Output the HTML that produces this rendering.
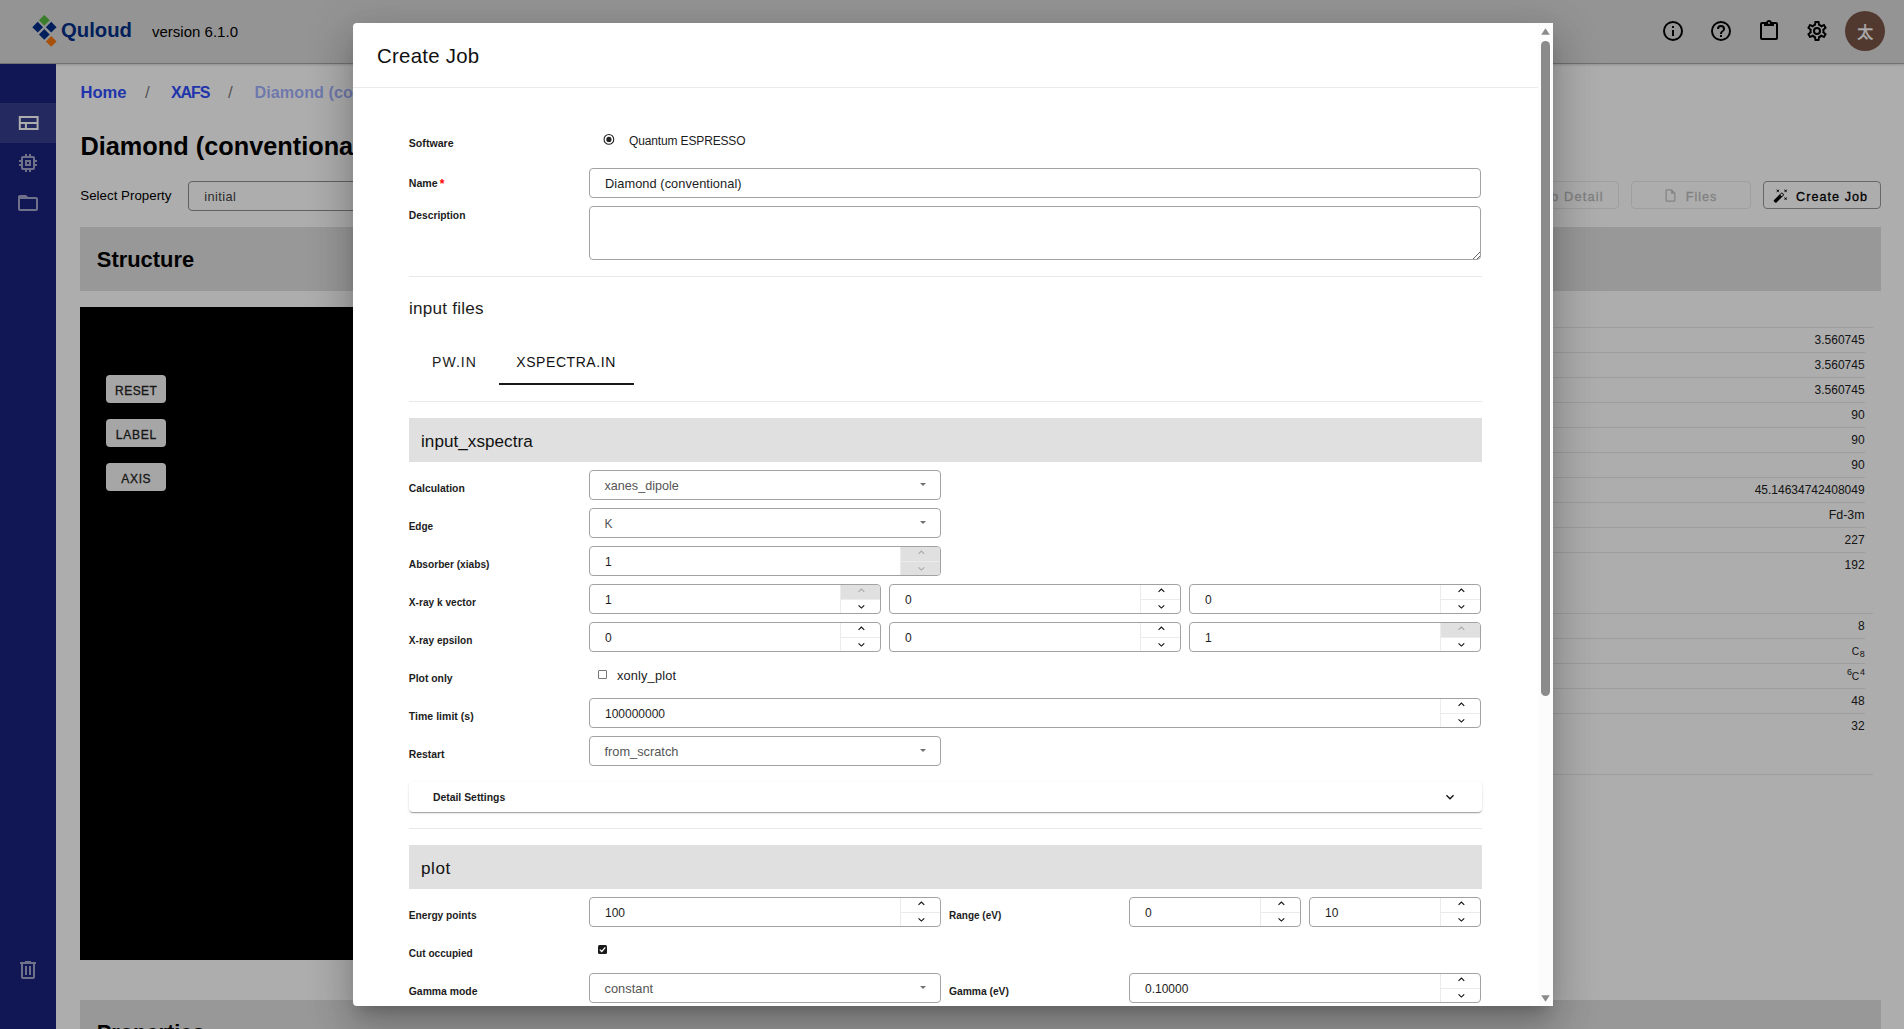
<!DOCTYPE html><html lang="en"><head><meta charset="utf-8"><title>Create Job</title><style>
html,body{margin:0;padding:0;background:#fff}
body{width:1904px;height:1029px;overflow:hidden;position:relative;font-family:"Liberation Sans","Noto Sans CJK JP",sans-serif;}
.t{position:absolute;white-space:nowrap;line-height:1;}
#page{position:absolute;left:0;top:0;width:1904px;height:1029px;overflow:hidden}
#modal{position:absolute;left:353px;top:23px;width:1200px;height:983px;background:#fff;border-radius:4px 0 0 4px;overflow:hidden;
 box-shadow:0 11px 15px -7px rgba(0,0,0,.2),0 24px 38px 3px rgba(0,0,0,.14),0 9px 46px 8px rgba(0,0,0,.12)}
</style></head><body><div id="page"><div style="position:absolute;left:0px;top:0px;width:1904px;height:1029px;background:#fff"></div><div style="position:absolute;left:0px;top:0px;width:1904px;height:63px;background:#dadada;border-bottom:1px solid #a6a6a6;box-shadow:0 1px 2px rgba(0,0,0,.16)"></div><svg style="position:absolute;left:28px;top:10px" width="36" height="44" viewBox="28 10 36 44"><rect x="40.5" y="16.5" width="7.6" height="7.6" fill="#55b83e" transform="rotate(45 44.3 20.3)"/><rect x="33.900000000000006" y="23.4" width="7.6" height="7.6" fill="#002f87" transform="rotate(45 37.7 27.2)"/><rect x="47.400000000000006" y="23.4" width="7.6" height="7.6" fill="#002f87" transform="rotate(45 51.2 27.2)"/><rect x="40.5" y="30.599999999999998" width="7.6" height="7.6" fill="#002f87" transform="rotate(45 44.3 34.4)"/><rect x="47.400000000000006" y="37.6" width="7.6" height="7.6" fill="#f7760f" transform="rotate(45 51.2 41.4)"/></svg><span class="t" style="left:61.00px;top:20.00px;font-size:20.3px;color:#002f87;font-weight:700;letter-spacing:-0.005px;">Quloud</span><span class="t" style="left:152.00px;top:24.00px;font-size:15.0px;color:#000;letter-spacing:0.009px;">version 6.1.0</span><svg style="position:absolute;left:1661px;top:19px" width="24" height="24" viewBox="0 0 24 24"><path fill="#000" d="M11,9H13V7H11M12,20C7.59,20 4,16.41 4,12C4,7.59 7.59,4 12,4C16.41,4 20,7.59 20,12C20,16.41 16.41,20 12,20M12,2A10,10 0 0,0 2,12A10,10 0 0,0 12,22A10,10 0 0,0 22,12A10,10 0 0,0 12,2M11,17H13V11H11V17Z"/></svg><svg style="position:absolute;left:1709px;top:19px" width="24" height="24" viewBox="0 0 24 24"><path fill="#000" d="M11,18H13V16H11V18M12,2A10,10 0 0,0 2,12A10,10 0 0,0 12,22A10,10 0 0,0 22,12A10,10 0 0,0 12,2M12,20C7.59,20 4,16.41 4,12C4,7.59 7.59,4 12,4C16.41,4 20,7.59 20,12C20,16.41 16.41,20 12,20M12,6A4,4 0 0,0 8,10H10A2,2 0 0,1 12,8A2,2 0 0,1 14,10C14,12 11,11.75 11,15H13C13,12.75 16,12.5 16,10A4,4 0 0,0 12,6Z"/></svg><svg style="position:absolute;left:1757px;top:19px" width="24" height="24" viewBox="0 0 24 24"><path fill="#000" d="M19,3H14.82C14.4,1.84 13.3,1 12,1C10.7,1 9.6,1.84 9.18,3H5A2,2 0 0,0 3,5V19A2,2 0 0,0 5,21H19A2,2 0 0,0 21,19V5A2,2 0 0,0 19,3M12,3A1,1 0 0,1 13,4A1,1 0 0,1 12,5A1,1 0 0,1 11,4A1,1 0 0,1 12,3M7,7H17V5H19V19H5V5H7V7Z"/></svg><svg style="position:absolute;left:1805px;top:19px" width="24" height="24" viewBox="0 0 24 24"><path fill="#000" d="M12,8A4,4 0 0,1 16,12A4,4 0 0,1 12,16A4,4 0 0,1 8,12A4,4 0 0,1 12,8M12,10A2,2 0 0,0 10,12A2,2 0 0,0 12,14A2,2 0 0,0 14,12A2,2 0 0,0 12,10M10,22C9.75,22 9.54,21.82 9.5,21.58L9.13,18.93C8.5,18.68 7.96,18.34 7.44,17.94L4.95,18.95C4.73,19.03 4.46,18.95 4.34,18.73L2.34,15.27C2.21,15.05 2.27,14.78 2.46,14.63L4.57,12.97L4.5,12L4.57,11L2.46,9.37C2.27,9.22 2.21,8.95 2.34,8.73L4.34,5.27C4.46,5.05 4.73,4.96 4.95,5.05L7.44,6.05C7.96,5.66 8.5,5.32 9.13,5.07L9.5,2.42C9.54,2.18 9.75,2 10,2H14C14.25,2 14.46,2.18 14.5,2.42L14.87,5.07C15.5,5.32 16.04,5.66 16.56,6.05L19.05,5.05C19.27,4.96 19.54,5.05 19.66,5.27L21.66,8.73C21.79,8.95 21.73,9.22 21.54,9.37L19.43,11L19.5,12L19.43,13L21.54,14.63C21.73,14.78 21.79,15.05 21.66,15.27L19.66,18.73C19.54,18.95 19.27,19.04 19.05,18.95L16.56,17.95C16.04,18.34 15.5,18.68 14.87,18.93L14.5,21.58C14.46,21.82 14.25,22 14,22H10M11.25,4L10.88,6.61C9.68,6.86 8.62,7.5 7.85,8.39L5.44,7.35L4.69,8.65L6.8,10.2C6.4,11.37 6.4,12.64 6.8,13.8L4.68,15.36L5.43,16.66L7.86,15.62C8.63,16.5 9.68,17.14 10.87,17.38L11.24,20H12.76L13.13,17.39C14.32,17.14 15.37,16.5 16.14,15.62L18.57,16.66L19.32,15.36L17.2,13.81C17.6,12.64 17.6,11.37 17.2,10.2L19.31,8.65L18.56,7.35L16.15,8.39C15.38,7.5 14.32,6.86 13.12,6.62L12.75,4H11.25Z"/></svg><div style="position:absolute;left:1845px;top:11px;width:40px;height:40px;border-radius:50%;background:#795548"></div><span class="t" style="left:1857.30px;top:25.00px;font-size:16.0px;color:#fff;letter-spacing:0.016px;-webkit-text-stroke:0.35px #fff;">太</span><div style="position:absolute;left:0px;top:64px;width:56px;height:965px;background:#1a237e"></div><div style="position:absolute;left:0px;top:103px;width:56px;height:40px;background:rgba(255,255,255,.12)"></div><svg style="position:absolute;left:16px;top:111px" width="24" height="24" viewBox="0 0 24 24"><path fill="#fff" d="M2.8,5H22.6V19H2.8V5M4.8,7V11H20.6V7H4.8M4.8,13V17H8.9V13H4.8M10.9,13V17H20.6V13H10.9Z"/></svg><svg style="position:absolute;left:16px;top:151px" width="24" height="24" viewBox="0 0 24 24"><path fill="rgba(255,255,255,.6)" d="M17,17H7V7H17M21,11V9H19V7C19,5.89 18.1,5 17,5H15V3H13V5H11V3H9V5H7C5.89,5 5,5.89 5,7V9H3V11H5V13H3V15H5V17A2,2 0 0,0 7,19H9V21H11V19H13V21H15V19H17A2,2 0 0,0 19,17V15H21V13H19V11M13,13H11V11H13M15,9H9V15H15V9Z"/></svg><svg style="position:absolute;left:16px;top:191px" width="24" height="24" viewBox="0 0 24 24"><path fill="rgba(255,255,255,.6)" d="M20,18H4V8H20M20,6H12L10,4H4C2.89,4 2,4.89 2,6V18A2,2 0 0,0 4,20H20A2,2 0 0,0 22,18V8C22,6.89 21.1,6 20,6Z"/></svg><svg style="position:absolute;left:16px;top:958px" width="24" height="24" viewBox="0 0 24 24"><path fill="rgba(255,255,255,.6)" d="M9,3V4H4V6H5V19A2,2 0 0,0 7,21H17A2,2 0 0,0 19,19V6H20V4H15V3H9M7,6H17V19H7V6M9,8V17H11V8H9M13,8V17H15V8H13Z"/></svg><span class="t" style="left:80.50px;top:85.00px;font-size:16.6px;color:#304ffe;font-weight:700;letter-spacing:-0.031px;">Home</span><span class="t" style="left:145.00px;top:84.00px;font-size:17.1px;color:rgba(0,0,0,.55);letter-spacing:1.528px;">/</span><span class="t" style="left:171.00px;top:85.00px;font-size:16.0px;color:#304ffe;font-weight:700;letter-spacing:-1.068px;">XAFS</span><span class="t" style="left:228.00px;top:84.00px;font-size:17.1px;color:rgba(0,0,0,.55);letter-spacing:1.528px;">/</span><span class="t" style="left:254.60px;top:84.00px;font-size:16.2px;color:rgba(48,79,254,.45);font-weight:700;letter-spacing:0.025px;">Diamond (conventional)</span><span class="t" style="left:80.50px;top:134.00px;font-size:25.3px;color:#000;font-weight:700;">Diamond (conventional)</span><span class="t" style="left:80.30px;top:189.00px;font-size:13.3px;color:#000;letter-spacing:0.018px;">Select Property</span><div style="position:absolute;left:188px;top:181px;width:500px;height:28px;border:1px solid #8e8e8e;border-radius:4px"></div><span class="t" style="left:204.20px;top:191.00px;font-size:12.8px;color:#424242;letter-spacing:0.404px;">initial</span><div style="position:absolute;left:1499px;top:181px;width:118px;height:26px;border:1px solid #eaeaea;border-radius:4px"></div><span class="t" style="left:1535.27px;top:191.00px;font-size:12.8px;color:#bdbdbd;letter-spacing:1.145px;-webkit-text-stroke:0.3px;">Job Detail</span><div style="position:absolute;left:1631px;top:181px;width:118px;height:26px;border:1px solid #eaeaea;border-radius:4px"></div><svg style="position:absolute;left:1662.6px;top:188px" width="15" height="15" viewBox="0 0 24 24"><path fill="#c4c4c4" d="M14,2H6A2,2 0 0,0 4,4V20A2,2 0 0,0 6,22H18A2,2 0 0,0 20,20V8L14,2M18,20H6V4H13V9H18V20Z"/></svg><span class="t" style="left:1685.70px;top:191.00px;font-size:12.5px;color:#bdbdbd;letter-spacing:1.068px;-webkit-text-stroke:0.3px;">Files</span><div style="position:absolute;left:1763px;top:181px;width:116px;height:26px;border:1px solid #9a9a9a;border-radius:4px"></div><svg style="position:absolute;left:1773.2px;top:187.5px" width="15.5" height="15.5" viewBox="0 0 24 24"><path fill="#000" d="M7.5,5.6L5,7L6.4,4.5L5,2L7.5,3.4L10,2L8.6,4.5L10,7L7.5,5.6M19.5,15.4L22,14L20.6,16.5L22,19L19.5,17.6L17,19L18.4,16.5L17,14L19.5,15.4M22,2L20.6,4.5L22,7L19.5,5.6L17,7L18.4,4.5L17,2L19.5,3.4L22,2M13.34,12.78L15.78,10.34L13.66,8.22L11.22,10.66L13.34,12.78M14.37,7.29L16.71,9.63C17.1,10 17.1,10.65 16.71,11.04L5.04,22.71C4.65,23.1 4,23.1 3.63,22.71L1.29,20.37C0.9,20 0.9,19.35 1.29,18.96L12.96,7.29C13.35,6.9 14,6.9 14.37,7.29Z"/></svg><span class="t" style="left:1796.10px;top:191.00px;font-size:12.6px;color:#000;letter-spacing:1.046px;-webkit-text-stroke:0.3px;">Create Job</span><div style="position:absolute;left:80px;top:227px;width:1801px;height:64px;background:#e0e0e0"></div><span class="t" style="left:96.80px;top:249.00px;font-size:21.9px;color:#000;font-weight:700;letter-spacing:0.005px;">Structure</span><div style="position:absolute;left:80px;top:307px;width:600px;height:653px;background:#000"></div><div style="position:absolute;left:106px;top:375px;width:60px;height:28px;background:#f5f5f5;border-radius:4px"></div><span class="t" style="left:115.09px;top:385.00px;font-size:12.0px;color:#222;letter-spacing:0.451px;-webkit-text-stroke:0.3px;">RESET</span><div style="position:absolute;left:106px;top:419px;width:60px;height:28px;background:#f5f5f5;border-radius:4px"></div><span class="t" style="left:115.70px;top:429.00px;font-size:12.0px;color:#222;letter-spacing:0.812px;-webkit-text-stroke:0.3px;">LABEL</span><div style="position:absolute;left:106px;top:463px;width:60px;height:28px;background:#f5f5f5;border-radius:4px"></div><span class="t" style="left:121.37px;top:473.00px;font-size:12.0px;color:#222;letter-spacing:0.64px;-webkit-text-stroke:0.3px;">AXIS</span><div style="position:absolute;left:900px;top:327px;width:973px;height:1px;background:#e8e8e8"></div><div style="position:absolute;left:900px;top:352px;width:965px;height:1px;background:#e8e8e8"></div><div style="position:absolute;left:900px;top:377px;width:965px;height:1px;background:#e8e8e8"></div><div style="position:absolute;left:900px;top:402px;width:965px;height:1px;background:#e8e8e8"></div><div style="position:absolute;left:900px;top:427px;width:965px;height:1px;background:#e8e8e8"></div><div style="position:absolute;left:900px;top:452px;width:965px;height:1px;background:#e8e8e8"></div><div style="position:absolute;left:900px;top:477px;width:965px;height:1px;background:#e8e8e8"></div><div style="position:absolute;left:900px;top:502px;width:965px;height:1px;background:#e8e8e8"></div><div style="position:absolute;left:900px;top:527px;width:965px;height:1px;background:#e8e8e8"></div><div style="position:absolute;left:900px;top:552px;width:965px;height:1px;background:#e8e8e8"></div><div style="position:absolute;left:900px;top:613px;width:973px;height:1px;background:#e8e8e8"></div><div style="position:absolute;left:900px;top:638px;width:965px;height:1px;background:#e8e8e8"></div><div style="position:absolute;left:900px;top:663px;width:965px;height:1px;background:#e8e8e8"></div><div style="position:absolute;left:900px;top:688px;width:965px;height:1px;background:#e8e8e8"></div><div style="position:absolute;left:900px;top:713px;width:965px;height:1px;background:#e8e8e8"></div><div style="position:absolute;left:900px;top:774px;width:973px;height:1px;background:#e8e8e8"></div><span class="t" style="left:1814.62px;top:334.00px;font-size:12.0px;color:#212121;letter-spacing:-0.01px;">3.560745</span><span class="t" style="left:1814.62px;top:359.00px;font-size:12.0px;color:#212121;letter-spacing:-0.01px;">3.560745</span><span class="t" style="left:1814.62px;top:384.00px;font-size:12.0px;color:#212121;letter-spacing:-0.01px;">3.560745</span><span class="t" style="left:1851.26px;top:409.00px;font-size:12.0px;color:#212121;letter-spacing:-0.01px;">90</span><span class="t" style="left:1851.26px;top:434.00px;font-size:12.0px;color:#212121;letter-spacing:-0.01px;">90</span><span class="t" style="left:1851.26px;top:459.00px;font-size:12.0px;color:#212121;letter-spacing:-0.01px;">90</span><span class="t" style="left:1754.68px;top:484.00px;font-size:12.0px;color:#212121;letter-spacing:-0.012px;">45.14634742408049</span><span class="t" style="left:1828.77px;top:509.00px;font-size:12.4px;color:#212121;">Fd-3m</span><span class="t" style="left:1844.60px;top:534.00px;font-size:12.0px;color:#212121;letter-spacing:-0.013px;">227</span><span class="t" style="left:1844.60px;top:559.00px;font-size:12.0px;color:#212121;letter-spacing:-0.013px;">192</span><span class="t" style="left:1857.92px;top:620.00px;font-size:12.0px;color:#212121;">8</span><span class="t" style="left:1851.26px;top:695.00px;font-size:12.0px;color:#212121;letter-spacing:-0.01px;">48</span><span class="t" style="left:1851.26px;top:720.00px;font-size:12.0px;color:#212121;letter-spacing:-0.01px;">32</span><span class="t" style="left:1851.80px;top:647.00px;font-size:10.2px;color:#212121;letter-spacing:0.034px;">C</span><span class="t" style="left:1859.70px;top:650.00px;font-size:9.0px;color:#212121;letter-spacing:-0.006px;">8</span><span class="t" style="left:1847.00px;top:668.00px;font-size:9.0px;color:#212121;letter-spacing:-0.806px;">6</span><span class="t" style="left:1851.80px;top:672.00px;font-size:10.2px;color:#212121;letter-spacing:0.034px;">C</span><span class="t" style="left:1860.00px;top:668.00px;font-size:9.0px;color:#212121;letter-spacing:-0.306px;">4</span><div style="position:absolute;left:80px;top:1000px;width:1801px;height:64px;background:#e0e0e0"></div><span class="t" style="left:96.80px;top:1022.00px;font-size:21.8px;color:#000;font-weight:700;letter-spacing:-0.011px;">Properties</span><div style="position:absolute;left:0px;top:0px;width:1904px;height:1029px;background:rgba(0,0,0,.32)"></div></div><div id="modal"><span class="t" style="left:24.00px;top:23.00px;font-size:20.4px;color:#111;letter-spacing:0.271px;">Create Job</span><div style="position:absolute;left:0px;top:64px;width:1185px;height:1px;background:#ebebeb"></div><span class="t" style="left:55.80px;top:115.00px;font-size:10.6px;color:#1c1c1c;font-weight:700;letter-spacing:0.012px;">Software</span><svg style="position:absolute;left:250px;top:111px" width="12" height="12" viewBox="0 0 12 12"><circle cx="5.9" cy="5.4" r="4.85" fill="#fff" stroke="#222" stroke-width="1.1"/><circle cx="5.9" cy="5.4" r="2.6" fill="#222"/></svg><span class="t" style="left:276.10px;top:112.00px;font-size:12.0px;color:#1c1c1c;letter-spacing:-0.151px;">Quantum ESPRESSO</span><span class="t" style="left:55.80px;top:155.00px;font-size:10.6px;color:#1c1c1c;font-weight:700;">Name</span><span class="t" style="left:86.80px;top:155.00px;font-size:12.1px;color:#f00;font-weight:700;letter-spacing:-0.01px;">*</span><div style="position:absolute;left:236px;top:145px;width:890px;height:28px;border:1px solid #a2a2a2;border-radius:4px;background:#fff;"></div><span class="t" style="left:252.00px;top:155.00px;font-size:12.8px;color:#1c1c1c;letter-spacing:0.069px;">Diamond (conventional)</span><span class="t" style="left:55.80px;top:188.00px;font-size:10.3px;color:#1c1c1c;font-weight:700;">Description</span><div style="position:absolute;left:236px;top:183px;width:890px;height:52px;border:1px solid #a2a2a2;border-radius:4px;background:#fff;"></div><svg style="position:absolute;left:1119px;top:228px" width="8" height="8" viewBox="0 0 8 8"><path d="M1,8L8,1M5,8L8,5" stroke="#666" stroke-width="1"/></svg><div style="position:absolute;left:56px;top:253px;width:1073px;height:1px;background:#e9e9e9"></div><span class="t" style="left:56.10px;top:277.00px;font-size:17.1px;color:#1c1c1c;letter-spacing:0.223px;">input files</span><span class="t" style="left:79.00px;top:332.00px;font-size:14.0px;color:#222;letter-spacing:1.066px;">PW.IN</span><span class="t" style="left:163.30px;top:332.00px;font-size:14.0px;color:#111;letter-spacing:0.56px;">XSPECTRA.IN</span><div style="position:absolute;left:146px;top:360px;width:135px;height:2px;background:#1a1a1a"></div><div style="position:absolute;left:56px;top:378px;width:1073px;height:1px;background:#e9e9e9"></div><div style="position:absolute;left:56px;top:395px;width:1073px;height:44px;background:#e0e0e0"></div><span class="t" style="left:68.00px;top:410.00px;font-size:17.1px;color:#111;letter-spacing:0.043px;">input_xspectra</span><span class="t" style="left:55.80px;top:461.00px;font-size:10.4px;color:#1c1c1c;font-weight:700;">Calculation</span><div style="position:absolute;left:236px;top:447px;width:350px;height:28px;border:1px solid #a2a2a2;border-radius:4px;background:#fff;"></div><svg style="position:absolute;left:566.8px;top:459.8px" width="6" height="3" viewBox="0 0 6 3"><path d="M0,0H6L3,3Z" fill="#707070"/></svg><span class="t" style="left:251.50px;top:457.00px;font-size:12.6px;color:#555;letter-spacing:0.012px;">xanes_dipole</span><span class="t" style="left:55.80px;top:499.00px;font-size:10.0px;color:#1c1c1c;font-weight:700;letter-spacing:-0.096px;">Edge</span><div style="position:absolute;left:236px;top:485px;width:350px;height:28px;border:1px solid #a2a2a2;border-radius:4px;background:#fff;"></div><svg style="position:absolute;left:566.8px;top:497.79999999999995px" width="6" height="3" viewBox="0 0 6 3"><path d="M0,0H6L3,3Z" fill="#707070"/></svg><span class="t" style="left:251.50px;top:495.00px;font-size:12.0px;color:#555;letter-spacing:-0.239px;">K</span><span class="t" style="left:55.80px;top:537.00px;font-size:10.2px;color:#1c1c1c;font-weight:700;letter-spacing:-0.02px;">Absorber (xiabs)</span><div style="position:absolute;left:236px;top:523px;width:350px;height:28px;border:1px solid #a2a2a2;border-radius:4px;background:#fff;"></div><div style="position:absolute;left:547px;top:524px;width:1px;height:28px;background:#ebebeb"></div><div style="position:absolute;left:548px;top:524px;width:39px;height:14px;background:#e0e0e0;border-top-right-radius:3px"></div><div style="position:absolute;left:548px;top:538px;width:39px;height:14px;background:#e0e0e0;border-bottom-right-radius:3px"></div><div style="position:absolute;left:548px;top:538px;width:39px;height:1px;background:#ebebeb"></div><svg style="position:absolute;left:0;top:0;overflow:visible" width="1" height="1"><path d="M565.55,530.85L568.40,528.15L571.25,530.85" fill="none" stroke="#aaa" stroke-width="1.15"/><path d="M565.55,544.35L568.40,547.05L571.25,544.35" fill="none" stroke="#aaa" stroke-width="1.15"/></svg><span class="t" style="left:252.00px;top:533.00px;font-size:12.0px;color:#1c1c1c;">1</span><span class="t" style="left:55.80px;top:575.00px;font-size:10.1px;color:#1c1c1c;font-weight:700;letter-spacing:0.024px;">X-ray k vector</span><div style="position:absolute;left:236px;top:561px;width:290px;height:28px;border:1px solid #a2a2a2;border-radius:4px;background:#fff;"></div><div style="position:absolute;left:487px;top:562px;width:1px;height:28px;background:#ebebeb"></div><div style="position:absolute;left:488px;top:562px;width:39px;height:14px;background:#e0e0e0;border-top-right-radius:3px"></div><div style="position:absolute;left:488px;top:576px;width:39px;height:1px;background:#ebebeb"></div><svg style="position:absolute;left:0;top:0;overflow:visible" width="1" height="1"><path d="M505.55,568.85L508.40,566.15L511.25,568.85" fill="none" stroke="#aaa" stroke-width="1.15"/><path d="M505.55,582.35L508.40,585.05L511.25,582.35" fill="none" stroke="#111" stroke-width="1.15"/></svg><span class="t" style="left:252.00px;top:571.00px;font-size:12.0px;color:#1c1c1c;">1</span><div style="position:absolute;left:536px;top:561px;width:290px;height:28px;border:1px solid #a2a2a2;border-radius:4px;background:#fff;"></div><div style="position:absolute;left:787px;top:562px;width:1px;height:28px;background:#ebebeb"></div><div style="position:absolute;left:788px;top:576px;width:39px;height:1px;background:#ebebeb"></div><svg style="position:absolute;left:0;top:0;overflow:visible" width="1" height="1"><path d="M805.55,568.85L808.40,566.15L811.25,568.85" fill="none" stroke="#111" stroke-width="1.15"/><path d="M805.55,582.35L808.40,585.05L811.25,582.35" fill="none" stroke="#111" stroke-width="1.15"/></svg><span class="t" style="left:552.00px;top:571.00px;font-size:12.0px;color:#1c1c1c;">0</span><div style="position:absolute;left:836px;top:561px;width:290px;height:28px;border:1px solid #a2a2a2;border-radius:4px;background:#fff;"></div><div style="position:absolute;left:1087px;top:562px;width:1px;height:28px;background:#ebebeb"></div><div style="position:absolute;left:1088px;top:576px;width:39px;height:1px;background:#ebebeb"></div><svg style="position:absolute;left:0;top:0;overflow:visible" width="1" height="1"><path d="M1105.55,568.85L1108.40,566.15L1111.25,568.85" fill="none" stroke="#111" stroke-width="1.15"/><path d="M1105.55,582.35L1108.40,585.05L1111.25,582.35" fill="none" stroke="#111" stroke-width="1.15"/></svg><span class="t" style="left:852.00px;top:571.00px;font-size:12.0px;color:#1c1c1c;">0</span><span class="t" style="left:55.80px;top:613.00px;font-size:10.1px;color:#1c1c1c;font-weight:700;letter-spacing:0.01px;">X-ray epsilon</span><div style="position:absolute;left:236px;top:599px;width:290px;height:28px;border:1px solid #a2a2a2;border-radius:4px;background:#fff;"></div><div style="position:absolute;left:487px;top:600px;width:1px;height:28px;background:#ebebeb"></div><div style="position:absolute;left:488px;top:614px;width:39px;height:1px;background:#ebebeb"></div><svg style="position:absolute;left:0;top:0;overflow:visible" width="1" height="1"><path d="M505.55,606.85L508.40,604.15L511.25,606.85" fill="none" stroke="#111" stroke-width="1.15"/><path d="M505.55,620.35L508.40,623.05L511.25,620.35" fill="none" stroke="#111" stroke-width="1.15"/></svg><span class="t" style="left:252.00px;top:609.00px;font-size:12.0px;color:#1c1c1c;">0</span><div style="position:absolute;left:536px;top:599px;width:290px;height:28px;border:1px solid #a2a2a2;border-radius:4px;background:#fff;"></div><div style="position:absolute;left:787px;top:600px;width:1px;height:28px;background:#ebebeb"></div><div style="position:absolute;left:788px;top:614px;width:39px;height:1px;background:#ebebeb"></div><svg style="position:absolute;left:0;top:0;overflow:visible" width="1" height="1"><path d="M805.55,606.85L808.40,604.15L811.25,606.85" fill="none" stroke="#111" stroke-width="1.15"/><path d="M805.55,620.35L808.40,623.05L811.25,620.35" fill="none" stroke="#111" stroke-width="1.15"/></svg><span class="t" style="left:552.00px;top:609.00px;font-size:12.0px;color:#1c1c1c;">0</span><div style="position:absolute;left:836px;top:599px;width:290px;height:28px;border:1px solid #a2a2a2;border-radius:4px;background:#fff;"></div><div style="position:absolute;left:1087px;top:600px;width:1px;height:28px;background:#ebebeb"></div><div style="position:absolute;left:1088px;top:600px;width:39px;height:14px;background:#e0e0e0;border-top-right-radius:3px"></div><div style="position:absolute;left:1088px;top:614px;width:39px;height:1px;background:#ebebeb"></div><svg style="position:absolute;left:0;top:0;overflow:visible" width="1" height="1"><path d="M1105.55,606.85L1108.40,604.15L1111.25,606.85" fill="none" stroke="#aaa" stroke-width="1.15"/><path d="M1105.55,620.35L1108.40,623.05L1111.25,620.35" fill="none" stroke="#111" stroke-width="1.15"/></svg><span class="t" style="left:852.00px;top:609.00px;font-size:12.0px;color:#1c1c1c;">1</span><span class="t" style="left:55.80px;top:651.00px;font-size:10.4px;color:#1c1c1c;font-weight:700;letter-spacing:-0.007px;">Plot only</span><div style="position:absolute;left:245px;top:647px;width:7px;height:7px;border:1px solid #767676;border-radius:1px;background:#fff"></div><span class="t" style="left:264.00px;top:647.00px;font-size:12.8px;color:#1c1c1c;letter-spacing:0.149px;">xonly_plot</span><span class="t" style="left:55.80px;top:688.00px;font-size:10.5px;color:#1c1c1c;font-weight:700;letter-spacing:0.022px;">Time limit (s)</span><div style="position:absolute;left:236px;top:675px;width:890px;height:28px;border:1px solid #a2a2a2;border-radius:4px;background:#fff;"></div><div style="position:absolute;left:1087px;top:676px;width:1px;height:28px;background:#ebebeb"></div><div style="position:absolute;left:1088px;top:690px;width:39px;height:1px;background:#ebebeb"></div><svg style="position:absolute;left:0;top:0;overflow:visible" width="1" height="1"><path d="M1105.55,682.85L1108.40,680.15L1111.25,682.85" fill="none" stroke="#111" stroke-width="1.15"/><path d="M1105.55,696.35L1108.40,699.05L1111.25,696.35" fill="none" stroke="#111" stroke-width="1.15"/></svg><span class="t" style="left:252.00px;top:685.00px;font-size:12.0px;color:#1c1c1c;letter-spacing:-0.013px;">100000000</span><span class="t" style="left:55.80px;top:727.00px;font-size:10.4px;color:#1c1c1c;font-weight:700;letter-spacing:-0.019px;">Restart</span><div style="position:absolute;left:236px;top:713px;width:350px;height:28px;border:1px solid #a2a2a2;border-radius:4px;background:#fff;"></div><svg style="position:absolute;left:566.8px;top:725.8px" width="6" height="3" viewBox="0 0 6 3"><path d="M0,0H6L3,3Z" fill="#707070"/></svg><span class="t" style="left:251.50px;top:723.00px;font-size:12.8px;color:#555;letter-spacing:-0.005px;">from_scratch</span><div style="position:absolute;left:56px;top:759px;width:1073px;height:30px;background:#fff;border-radius:4px;box-shadow:0 2px 1px -1px rgba(0,0,0,.2),0 1px 1px 0 rgba(0,0,0,.14),0 1px 3px 0 rgba(0,0,0,.12)"></div><span class="t" style="left:79.90px;top:770.00px;font-size:10.4px;color:#1c1c1c;font-weight:700;letter-spacing:0.011px;">Detail Settings</span><svg style="position:absolute;left:1089px;top:766px" width="16" height="16" viewBox="0 0 24 24"><path fill="#111" d="M7.41,8.58L12,13.17L16.59,8.58L18,10L12,16L6,10L7.41,8.58Z"/></svg><div style="position:absolute;left:56px;top:805px;width:1073px;height:1px;background:#e9e9e9"></div><div style="position:absolute;left:56px;top:822px;width:1073px;height:44px;background:#e0e0e0"></div><span class="t" style="left:68.00px;top:837.00px;font-size:17.1px;color:#111;letter-spacing:0.58px;">plot</span><span class="t" style="left:55.80px;top:888.00px;font-size:10.2px;color:#1c1c1c;font-weight:700;letter-spacing:-0.01px;">Energy points</span><div style="position:absolute;left:236px;top:874px;width:350px;height:28px;border:1px solid #a2a2a2;border-radius:4px;background:#fff;"></div><div style="position:absolute;left:547px;top:875px;width:1px;height:28px;background:#ebebeb"></div><div style="position:absolute;left:548px;top:889px;width:39px;height:1px;background:#ebebeb"></div><svg style="position:absolute;left:0;top:0;overflow:visible" width="1" height="1"><path d="M565.55,881.85L568.40,879.15L571.25,881.85" fill="none" stroke="#111" stroke-width="1.15"/><path d="M565.55,895.35L568.40,898.05L571.25,895.35" fill="none" stroke="#111" stroke-width="1.15"/></svg><span class="t" style="left:252.00px;top:884.00px;font-size:12.0px;color:#1c1c1c;letter-spacing:-0.013px;">100</span><span class="t" style="left:596.00px;top:888.00px;font-size:10.0px;color:#1c1c1c;font-weight:700;">Range (eV)</span><div style="position:absolute;left:776px;top:874px;width:170px;height:28px;border:1px solid #a2a2a2;border-radius:4px;background:#fff;"></div><div style="position:absolute;left:907px;top:875px;width:1px;height:28px;background:#ebebeb"></div><div style="position:absolute;left:908px;top:889px;width:39px;height:1px;background:#ebebeb"></div><svg style="position:absolute;left:0;top:0;overflow:visible" width="1" height="1"><path d="M925.55,881.85L928.40,879.15L931.25,881.85" fill="none" stroke="#111" stroke-width="1.15"/><path d="M925.55,895.35L928.40,898.05L931.25,895.35" fill="none" stroke="#111" stroke-width="1.15"/></svg><span class="t" style="left:792.00px;top:884.00px;font-size:12.0px;color:#1c1c1c;">0</span><div style="position:absolute;left:956px;top:874px;width:170px;height:28px;border:1px solid #a2a2a2;border-radius:4px;background:#fff;"></div><div style="position:absolute;left:1087px;top:875px;width:1px;height:28px;background:#ebebeb"></div><div style="position:absolute;left:1088px;top:889px;width:39px;height:1px;background:#ebebeb"></div><svg style="position:absolute;left:0;top:0;overflow:visible" width="1" height="1"><path d="M1105.55,881.85L1108.40,879.15L1111.25,881.85" fill="none" stroke="#111" stroke-width="1.15"/><path d="M1105.55,895.35L1108.40,898.05L1111.25,895.35" fill="none" stroke="#111" stroke-width="1.15"/></svg><span class="t" style="left:972.00px;top:884.00px;font-size:12.0px;color:#1c1c1c;letter-spacing:-0.01px;">10</span><span class="t" style="left:55.80px;top:926.00px;font-size:10.1px;color:#1c1c1c;font-weight:700;letter-spacing:-0.007px;">Cut occupied</span><svg style="position:absolute;left:245px;top:922px" width="9" height="9" viewBox="0 0 9 9"><rect width="9" height="9" rx="1.5" fill="#1a1a1a"/><path d="M1.8,4.6L3.8,6.5L7.3,2.4" stroke="#fff" stroke-width="1.3" fill="none"/></svg><span class="t" style="left:55.80px;top:964.00px;font-size:10.4px;color:#1c1c1c;font-weight:700;letter-spacing:-0.008px;">Gamma mode</span><div style="position:absolute;left:236px;top:950px;width:350px;height:28px;border:1px solid #a2a2a2;border-radius:4px;background:#fff;"></div><svg style="position:absolute;left:566.8px;top:962.8px" width="6" height="3" viewBox="0 0 6 3"><path d="M0,0H6L3,3Z" fill="#707070"/></svg><span class="t" style="left:251.50px;top:960.00px;font-size:12.8px;color:#555;letter-spacing:0.03px;">constant</span><span class="t" style="left:596.00px;top:964.00px;font-size:10.3px;color:#1c1c1c;font-weight:700;letter-spacing:-0.026px;">Gamma (eV)</span><div style="position:absolute;left:776px;top:950px;width:350px;height:28px;border:1px solid #a2a2a2;border-radius:4px;background:#fff;"></div><div style="position:absolute;left:1087px;top:951px;width:1px;height:28px;background:#ebebeb"></div><div style="position:absolute;left:1088px;top:965px;width:39px;height:1px;background:#ebebeb"></div><svg style="position:absolute;left:0;top:0;overflow:visible" width="1" height="1"><path d="M1105.55,957.85L1108.40,955.15L1111.25,957.85" fill="none" stroke="#111" stroke-width="1.15"/><path d="M1105.55,971.35L1108.40,974.05L1111.25,971.35" fill="none" stroke="#111" stroke-width="1.15"/></svg><span class="t" style="left:792.00px;top:960.00px;font-size:12.0px;color:#1c1c1c;letter-spacing:-0.012px;">0.10000</span><div style="position:absolute;left:1185px;top:0px;width:15px;height:983px;background:#fcfcfc"></div><svg style="position:absolute;left:1188px;top:5px" width="9" height="7" viewBox="0 0 9 7"><path d="M4.5,0.3L8.8,6.8H0.2Z" fill="#8b8b8b"/></svg><div style="position:absolute;left:1188px;top:18px;width:9px;height:655px;background:#8b8b8b;border-radius:4.5px"></div><svg style="position:absolute;left:1188px;top:972px" width="9" height="7" viewBox="0 0 9 7"><path d="M4.5,6.7L8.8,0.2H0.2Z" fill="#8b8b8b"/></svg></div></body></html>
